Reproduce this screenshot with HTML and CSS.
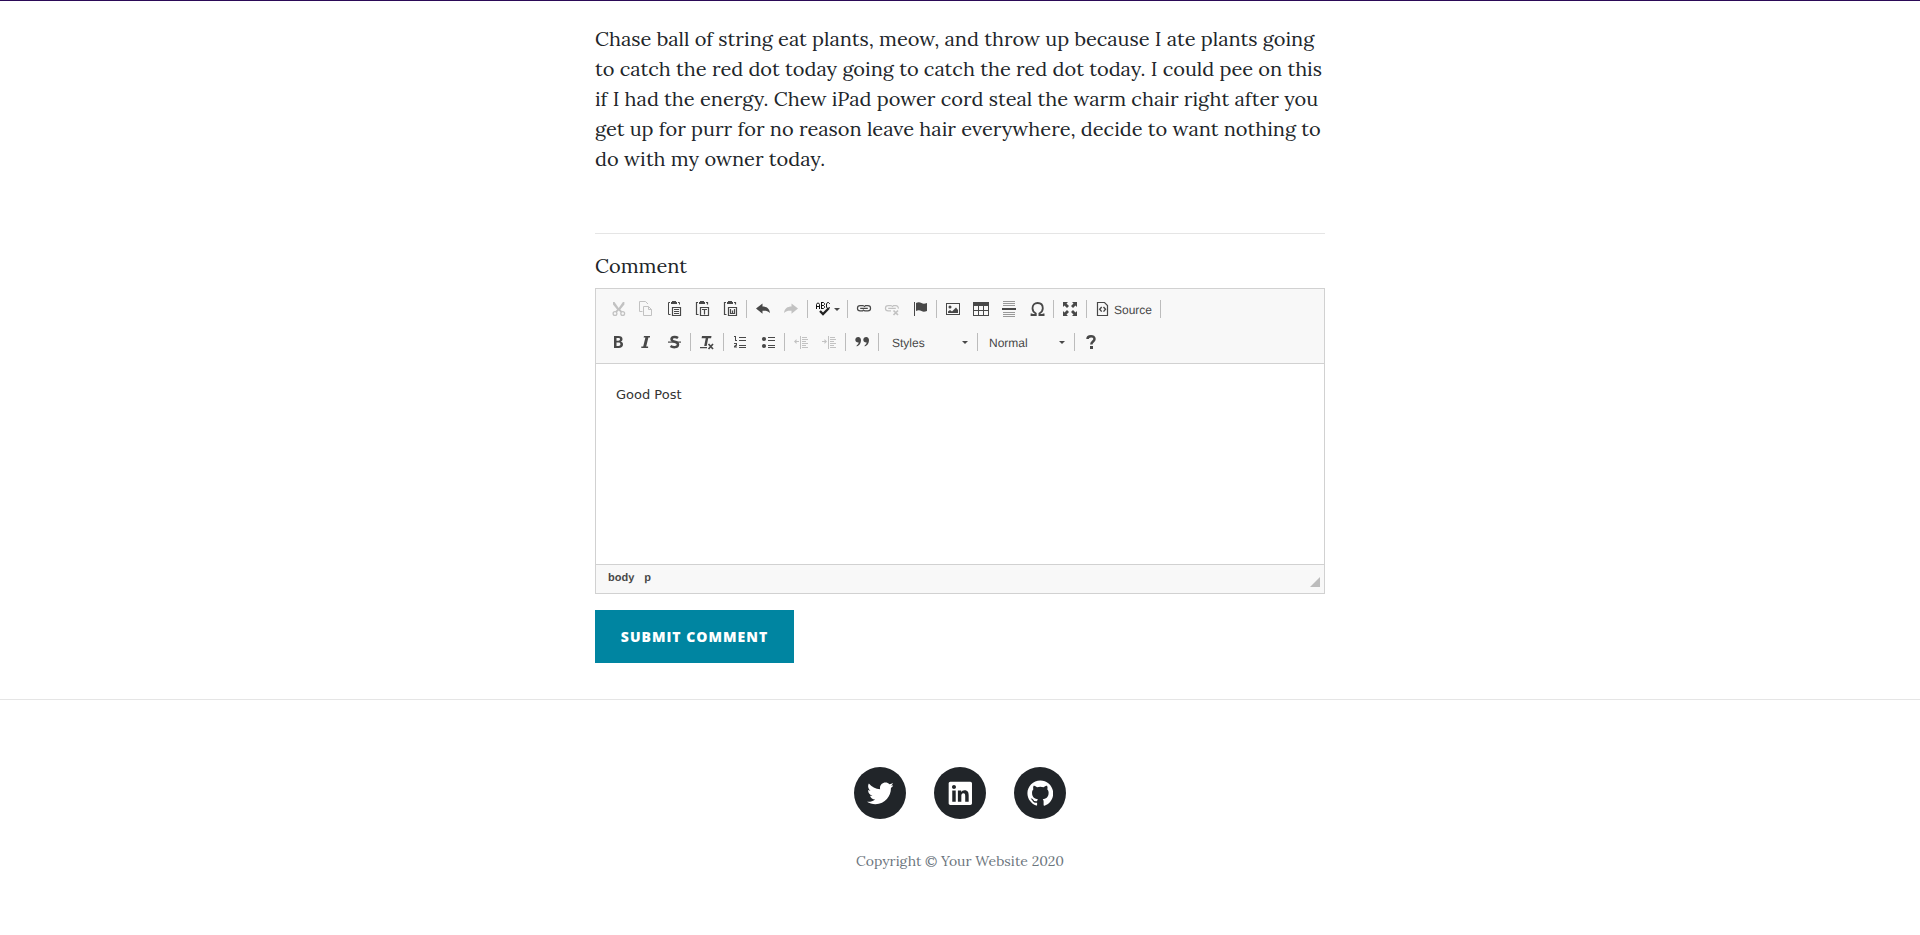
FILE: index.html
```html
<!DOCTYPE html>
<html lang="en">
<head>
<meta charset="utf-8">
<title>Blog Post</title>
<link rel="stylesheet" href="styles.css">
</head>
<body>
<div class="masthead-edge"></div>
<main class="column">
  <p class="post-text">
    <span class="line">Chase ball of string eat plants, meow, and throw up because I ate plants going</span>
    <span class="line">to catch the red dot today going to catch the red dot today. I could pee on this</span>
    <span class="line">if I had the energy. Chew iPad power cord steal the warm chair right after you</span>
    <span class="line">get up for purr for no reason leave hair everywhere, decide to want nothing to</span>
    <span class="line">do with my owner today.</span>
  </p>
  <hr class="rule">
  <label class="comment-label"><span>Comment</span></label>
  <div class="editor">
    <div class="toolbar">
      <div class="row">
        <span class="btn off"><svg viewBox="0 0 16 16"><path d="M3 1l1.500 0 4.200 6 4.200-6 1.500 0v2.500L10.300 8.500l2 2-1.600 1-2-2-2 2-1.600-1 2-2L3 3.500z"/><g fill="none" stroke="currentColor" stroke-width="1.300"><circle cx="5" cy="12.500" r="1.900"/><circle cx="12.700" cy="12.500" r="1.900"/></g></svg></span>
        <span class="btn off"><svg viewBox="0 0 16 16" fill="none" stroke="currentColor"><path d="M4.500 10.500h-3v-10h6l2.500 2.500M5.500 5.500h5l3 3v6h-8zM10.500 5.500v3h3"/></svg></span>
        <span class="btn"><svg viewBox="0 0 16 16"><path d="M5 1h1V0h4v1h1v2H5z"/><path fill="none" stroke="currentColor" d="M4 1.500h-1.500v12h2M12 1.500h1.500v2"/><path fill="none" stroke="currentColor" d="M6.500 6.500h8v8h-8zM8 8.500h5M8 10.500h5M8 12.500h5" stroke-width="1.200"/></svg></span>
        <span class="btn"><svg viewBox="0 0 16 16"><path d="M5 1h1V0h4v1h1v2H5z"/><path fill="none" stroke="currentColor" d="M4 1.500h-1.500v12h2M12 1.500h1.500v2M6.500 6.500h8v8h-8zM8 8.500h5M10.500 8.500v5" stroke-width="1.200"/></svg></span>
        <span class="btn"><svg viewBox="0 0 16 16"><path d="M5 1h1V0h4v1h1v2H5z"/><path fill="none" stroke="currentColor" d="M4 1.500h-1.500v12h2M12 1.500h1.500v2M6.500 6.500h8v8h-8zM8.500 8v4.500h4V8M10.500 9.500v3" stroke-width="1.200"/></svg></span>
        <i class="sep"></i>
        <span class="btn"><svg viewBox="0 0 16 16"><path d="M1 7.500L7.500 2.500v3c4 0 7 2 7.500 6.500-2-2.300-4.500-2.500-7.500-2.300v3z"/></svg></span>
        <span class="btn off"><svg viewBox="0 0 16 16"><path d="M15 7.500L8.500 2.500v3c-4 0-7 2-7.500 6.500 2-2.300 4.500-2.500 7.500-2.300v3z"/></svg></span>
        <i class="sep"></i>
        <span class="btn spell"><svg viewBox="0 0 16 16"><path fill="none" stroke="#111" d="M.5 8V3.500L1.500 2h1l1 1.500V8M.5 5.500h3M5.500 1.500v6M5 1.500h2.500l1 1v1l-1 1h-2M7.500 4.500l1 1v1l-1 1H5M13.500 3V2.500l-1-1h-1l-1 1.500v3l1 1.500h1l1-1V6"/><path fill="none" stroke="#222" stroke-width="2.300" d="M4 10l3 3 6-6"/></svg><i class="arrow"></i></span>
        <i class="sep"></i>
        <span class="btn"><svg viewBox="0 0 16 16" fill="none" stroke="currentColor" stroke-width="1.200"><path d="M7 9.900H4.100a2.500 2.500 0 010-5.300h2.700a2.500 2.500 0 012.200 1.300M9 4.600h2.900a2.500 2.500 0 010 5.300H9.200A2.500 2.500 0 017 8.600M4.200 7.300h7.600"/></svg></span>
        <span class="btn off"><svg viewBox="0 0 16 16" fill="none" stroke="currentColor" stroke-width="1.200"><path d="M7 9.900H4.100a2.500 2.500 0 010-5.300h2.700a2.500 2.500 0 012.200 1.300M9 4.600h2.900a2.500 2.500 0 012.400 3M4.200 7.300h7.600"/><path d="M9.500 9.500l4.500 4.500m0-4.500L9.500 14" stroke-width="1.700"/></svg></span>
        <span class="btn"><svg viewBox="0 0 16 16"><path d="M2 1h1v14H2zM4 2c2-1.300 4-1 5.500 0s3 1 5.500 0v8c-2.500 1-4 1-5.500 0S6 8.700 4 10z"/></svg></span>
        <i class="sep"></i>
        <span class="btn"><svg viewBox="0 0 16 16"><path fill-rule="evenodd" d="M1 2h14v12H1zM2 3v10h12V3z"/><circle cx="5" cy="6" r="1.500"/><path d="M3 12V10.500l2-1.500 2 1.500 4-4 2 2.500v3z"/></svg></span>
        <span class="btn"><svg viewBox="0 0 16 16"><path fill-rule="evenodd" d="M0 1h16v14H0zM1 5v4h4V5zM6 5v4h4V5zM11 5v4h4V5zM1 10v4h4v-4zM6 10v4h4v-4zM11 10v4h4v-4z"/></svg></span>
        <span class="btn"><svg viewBox="0 0 16 16"><path fill="#999" d="M2 0h12v1H2zM2 2h12v1H2zM2 4h12v1H2zM2 11h12v1H2zM2 13h12v1H2zM2 15h12v1H2z"/><path d="M1 7h14v2H1z"/></svg></span>
        <span class="btn"><svg viewBox="0 0 16 16"><path fill="none" stroke="currentColor" stroke-width="1.800" d="M2.500 12.500v1.500h4.300v-1.500C4.600 11.300 3.500 9.500 3.500 7.300 3.500 4 5.600 2 8.600 2s5.200 2 5.200 5.300c0 2.200-1.200 4-3.400 5.200V14h4.200v-1.500"/></svg></span>
        <i class="sep"></i>
        <span class="btn"><svg viewBox="0 0 16 16"><path d="M1 1h5L4.500 2.500 7 5 5 7 2.500 4.500 1 6zM15 1v5l-1.500-1.500L11 7 9 5l2.500-2.500L10 1zM1 15v-5l1.500 1.500L5 9l2 2-2.500 2.500L6 15zM15 15h-5l1.500-1.500L9 11l2-2 2.500 2.500L15 10z"/></svg></span>
        <i class="sep"></i>
        <span class="btn source"><svg viewBox="0 0 16 16" fill="none" stroke="currentColor"><path d="M2.500 1.500h7l3 3v10h-10z" stroke-width="1.200"/><path stroke-width="1.400" d="M6.700 6L4.700 8.300l2 2.300M8.500 6l2 2.300-2 2.300"/></svg><b>Source</b></span>
        <i class="sep"></i>
      </div>
      <div class="row">
        <span class="btn"><svg viewBox="0 0 16 16"><path fill-rule="evenodd" d="M4 2h4.500c2.600 0 4 1 4 3 0 1.300-.6 2.200-1.800 2.600 1.500.4 2.300 1.400 2.300 2.900 0 2.300-1.600 3.500-4.300 3.500H4zM6.500 4v2.700h1.800c1.200 0 1.700-.5 1.700-1.400S9.500 4 8.300 4zM6.500 8.600V12h2c1.300 0 1.900-.6 1.900-1.700S9.800 8.600 8.500 8.600z"/></svg></span>
        <span class="btn"><svg viewBox="0 0 16 16"><path d="M6 2h6v1.500h-1.600L8.200 12.500h1.900V14H3.300v-1.500h1.900L7.400 3.500H5.600z"/></svg></span>
        <span class="btn"><svg viewBox="0 0 16 16"><path fill="none" stroke="currentColor" stroke-width="2.500" d="M12 4C10.500 2.800 6 2.200 5.500 5c0 4 6.500 1.500 6.500 5.500 0 3.500-5.500 3-7.500 1.500"/><path d="M2 7.500h13v1.200H2z"/></svg></span>
        <i class="sep"></i>
        <span class="btn"><svg viewBox="0 0 16 16"><path d="M3 2h9.500l-.4 2.200H9.200L7.700 12H5.200l1.500-7.800H2.600zM1 13h7v1.200H1z"/><path fill="none" stroke="currentColor" stroke-width="1.700" d="M9.500 10l4.500 5M14 10l-4.500 5"/></svg></span>
        <i class="sep"></i>
        <span class="btn"><svg viewBox="0 0 16 16"><path d="M7 3h7v1H7zM7 6h7v1H7zM7 11h7v1H7zM7 13h7v1H7zM2 2h2v4h1v1H3V3H2zM2 9h3v2.500L3.500 12.500H5v1H2v-1.500l2-1.500v-.5H2z"/></svg></span>
        <span class="btn"><svg viewBox="0 0 16 16"><path d="M8 3h7v1H8zM8 6h7v1H8zM8 11h7v1H8zM8 13h7v1H8z"/><circle cx="4" cy="5" r="2.100"/><circle cx="4" cy="12" r="2.100"/></svg></span>
        <i class="sep"></i>
        <span class="btn off"><svg viewBox="0 0 16 16"><path d="M7 2h1v13H7zM9 3h5v1H9zM9 5h6v1H9zM9 7h4v1H9zM9 9h6v1H9zM9 11h4v1H9zM9 13h6v1H9zM1 7.500L3.500 5v2H6v1H3.500v2z"/></svg></span>
        <span class="btn off"><svg viewBox="0 0 16 16"><path d="M7 2h1v13H7zM9 3h5v1H9zM9 5h6v1H9zM9 7h4v1H9zM9 9h6v1H9zM9 11h4v1H9zM9 13h6v1H9zM6 7.500L3.500 5v2H1v1h2.500v2z"/></svg></span>
        <i class="sep"></i>
        <span class="btn"><svg viewBox="0 0 16 16"><path d="M4.200 3C6 3 7 4.300 7 6.200c0 3-1.600 5.300-4.300 6.300v-1.200c1.200-.6 1.900-1.700 2-2.800C2.800 8.700 1.300 7.600 1.300 5.800 1.300 4.200 2.600 3 4.200 3z"/><path d="M12.200 3C14 3 15 4.300 15 6.200c0 3-1.600 5.300-4.300 6.300v-1.200c1.200-.6 1.900-1.700 2-2.800-1.900.2-3.400-.9-3.400-2.700C9.300 4.200 10.600 3 12.200 3z"/></svg></span>
        <i class="sep"></i>
        <span class="combo styles"><b>Styles</b><i class="arrow"></i></span>
        <i class="sep"></i>
        <span class="combo format"><b>Normal</b><i class="arrow"></i></span>
        <i class="sep"></i>
        <span class="btn"><svg viewBox="0 0 16 16"><path fill="none" stroke="currentColor" stroke-width="2.500" d="M4.500 5C4.500 1.400 11.500 1 11.500 5c0 2.500-3.200 2.500-3.200 5.500"/><path d="M7 12h3v3H7z"/></svg></span>
      </div>
    </div>
    <div class="content">Good Post</div>
    <div class="path"><span>body</span><span>p</span><svg class="resizer" viewBox="0 0 10 10"><path d="M10 0v10H0z"/></svg></div>
  </div>
  <button class="submit" type="button">Submit Comment</button>
</main>
<footer class="footer">
  <div class="social">
    <a class="disc"><svg viewBox="0 0 512 512"><path d="M459.370 151.716c.325 4.548.325 9.097.325 13.645 0 138.720-105.583 298.558-298.558 298.558-59.452 0-114.680-17.219-161.137-47.106 8.447.974 16.568 1.299 25.340 1.299 49.055 0 94.213-16.568 130.274-44.832-46.132-.975-84.792-31.188-98.112-72.772 6.498.974 12.995 1.624 19.818 1.624 9.421 0 18.843-1.300 27.614-3.573-48.081-9.747-84.143-51.980-84.143-102.985v-1.299c13.969 7.797 30.214 12.670 47.431 13.319-28.264-18.843-46.781-51.005-46.781-87.391 0-19.492 5.197-37.360 14.294-52.954 51.655 63.675 129.300 105.258 216.365 109.807-1.624-7.797-2.599-15.918-2.599-24.040 0-57.828 46.782-104.934 104.934-104.934 30.213 0 57.502 12.670 76.670 33.137 23.715-4.548 46.456-13.320 66.599-25.340-7.798 24.366-24.366 44.833-46.132 57.827 21.117-2.273 41.584-8.122 60.426-16.243-14.292 20.791-32.161 39.308-52.628 54.253z"/></svg></a>
    <a class="disc"><svg viewBox="-32 0 512 512"><path d="M416 32H31.900C14.300 32 0 46.500 0 64.300v383.400C0 465.500 14.300 480 31.900 480H416c17.600 0 32-14.500 32-32.300V64.300c0-17.800-14.400-32.300-32-32.300zM135.400 416H69V202.200h66.500V416zm-33.200-243c-21.300 0-38.500-17.300-38.500-38.500S80.900 96 102.200 96c21.200 0 38.500 17.300 38.500 38.500 0 21.300-17.200 38.500-38.500 38.500zm282.100 243h-66.400V312c0-24.800-.5-56.700-34.500-56.700-34.600 0-39.900 27-39.900 54.900V416h-66.400V202.200h63.700v29.200h.9c8.900-16.800 30.600-34.500 62.900-34.500 67.200 0 79.700 44.300 79.700 101.900V416z"/></svg></a>
    <a class="disc"><svg viewBox="0 0 496 512"><path d="M248 8C111 8 0 119 0 256c0 110 71 202 169 235 13 2 17-6 17-12v-44c-69 15-84-30-84-30-11-28-28-36-28-36-22-16 2-15 2-15 25 2 38 26 38 26 22 38 58 27 72 21 2-16 9-27 16-33-55-6-113-28-113-123 0-27 10-49 26-66-3-7-11-32 2-66 0 0 21-7 68 25a237 237 0 01126 0c47-32 68-25 68-25 13 34 5 59 2 66 16 17 26 39 26 66 0 95-58 117-113 123 9 8 17 23 17 46v67c0 7 4 14 17 12 98-33 167-125 167-235C496 119 385 8 248 8z"/></svg></a>
  </div>
  <p class="copyright"><span>Copyright © Your Website 2020</span></p>
</footer>
</body>
</html>
```
FILE: styles.css
```css
* { box-sizing: border-box; }
body { margin: 0; height: 935px; overflow: hidden; background: #fff; color: #212529; font: 20px/30px Lora, "Liberation Serif", serif; }
.masthead-edge { height: 1px; background: #2b0a57; }
.column { width: 730px; margin: 0 auto; }
.post-text { margin: 23px 0 59px; }
.line { display: table; white-space: nowrap; }
.rule { margin: 0; border: 0; border-top: 1px solid #e5e5e5; }
.comment-label { display: block; height: 54px; padding-top: 17px; }
.editor { height: 306px; border: 1px solid #d1d1d1; font: 12px/16px "Liberation Sans", Arial, sans-serif; color: #484848; }
.toolbar { height: 75px; padding: 8px; border-bottom: 1px solid #d1d1d1; background: #f8f8f8; }
.row { display: flex; height: 24px; margin-bottom: 9px; }
.btn { display: flex; width: 28px; height: 24px; padding: 4px 6px; color: #484848; }
.btn svg { width: 16px; height: 16px; flex: none; fill: currentColor; }
.btn svg[fill="none"] { fill: none; }
.btn.off { color: #c2c2c2; }
.sep { width: 1px; height: 18px; margin: 3px 2px 0; background: #bcbcbc; }
.btn b, .combo b { font-weight: 400; text-rendering: geometricPrecision; }
.btn.spell { width: 35px; }
.arrow { width: 0; height: 0; border: 3px solid transparent; border-top-color: #484848; border-bottom: 0; }
.spell .arrow { margin: 7px 0 0 2px; }
.btn.source { width: 69px; }
.source b { margin: 1px 0 0 3px; }
.combo { display: flex; justify-content: space-between; padding: 5px 9px 0 11px; }
.combo .arrow { margin-top: 6px; }
.styles { width: 94px; padding-right: 7px; }
.format { width: 92px; padding: 5px 7px 0 9px; }
.content { height: 200px; padding: 21px 20px; font: 13px/20.800px "DejaVu Sans", sans-serif; color: #333; }
.path { display: flex; height: 29px; gap: 10px; padding: 6px 4px 0 12px; border-top: 1px solid #d1d1d1; background: #f8f8f8; font-size: 11px; font-weight: 700; line-height: 15px; text-rendering: geometricPrecision; }
.resizer { width: 10px; height: 10px; margin: 6px 0 0 auto; fill: #bcbcbc; }
.submit { display: block; width: 199px; height: 53px; margin: 16px 0 36px; padding: 0; border: 0; background: #0085a1; color: #fff; font: 800 14px/21px "Open Sans", sans-serif; letter-spacing: 1px; text-transform: uppercase; }
.footer { border-top: 1px solid #e5e5e5; padding-top: 67px; }
.social { display: flex; justify-content: center; gap: 28px; }
.disc { display: flex; align-items: center; justify-content: center; width: 52px; height: 52px; border-radius: 50%; background: #212529; }
.disc svg { width: 26.670px; height: 26.670px; fill: #fff; }
.copyright { margin: 32px 0 0; text-align: center; font-size: 14px; line-height: 21px; color: #6c757d; }
```
